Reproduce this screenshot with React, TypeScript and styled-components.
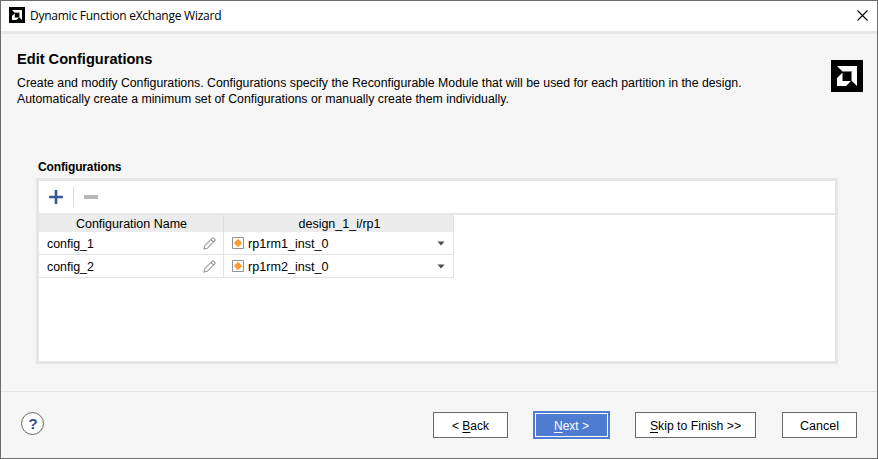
import React from 'react';
import styled, { createGlobalStyle } from 'styled-components';

const GlobalStyle = createGlobalStyle`
  *, *::before, *::after { box-sizing: border-box; }
  body { margin: 0; }
`;

const Dialog = styled.div`
  width: 878px;
  height: 459px;
  display: flex;
  flex-direction: column;
  border: 1px solid #6d6d6d;
  background: #f6f6f6;
  color: #000;
  font: 12px/16px "Liberation Sans", Arial, sans-serif;
  white-space: nowrap;
  overflow: hidden;
`;

const TitleBar = styled.header`
  height: 33px;
  flex: none;
  display: flex;
  align-items: flex-start;
  padding: 6px 9px 0 8px;
  background: #fff;
  border-bottom: 3px solid #e6e6e6;
`;

const Title = styled.span`
  margin-left: 5px;
  padding-top: 1px;
  flex: 1;
  font-family: "Open Sans", "Noto Sans", sans-serif;
  letter-spacing: -0.25px;
`;

const CloseButton = styled.button`
  display: flex;
  padding: 3px 0 0;
  border: 0;
  background: none;
`;

const Intro = styled.section`
  height: 124px;
  flex: none;
  display: flex;
  justify-content: space-between;
  padding: 17px 14px 0 16px;
`;

const Heading = styled.h1`
  margin: 0 0 8px;
  font-size: 14.6px;
  line-height: 16px;
`;

const Description = styled.p`
  margin: 0;
  font-size: 12.3px;
  line-height: 16px;
`;

const LogoSlot = styled.div`
  padding-top: 9px;
`;

const Content = styled.main`
  flex: none;
  height: 234px;
  padding: 0 39px 0 35px;
  border-bottom: 1px solid #e3e3e3;
`;

const SectionTitle = styled.h2`
  margin: 0;
  padding: 1px 0 0 2px;
  height: 20px;
  font-size: 12px;
  line-height: 16px;
  letter-spacing: -0.14px;
`;

const Panel = styled.div`
  height: 186px;
  border: 3px solid #e6e6e6;
  background: #fff;
`;

const Toolbar = styled.div`
  height: 34px;
  display: flex;
  align-items: center;
  padding-left: 10px;
  border-bottom: 2px solid #e6e6e6;
`;

const ToolSeparator = styled.div`
  width: 1px;
  height: 20px;
  margin: 0 10px;
  background: #dcdcdc;
`;

const TableArea = styled.div`
  width: 415px;
  border-right: 1px solid #e3e3e3;
`;

const Table = styled.div`
  display: grid;
  grid-template-columns: 184px 230px;
  grid-template-rows: 17px 23px 23px;
`;

const HeaderCell = styled.div<{ $divided?: boolean }>`
  display: flex;
  align-items: center;
  justify-content: center;
  padding-left: ${p => (p.$divided ? 2 : 1)}px;
  border-left: ${p => (p.$divided ? '1px solid #dcdcdc' : '0')};
  background: #ececec;
  font-size: 12.5px;
`;

const Cell = styled.div<{ $assigned?: boolean }>`
  display: flex;
  align-items: center;
  padding: 0 ${p => (p.$assigned ? 8 : 7)}px 0 8px;
  border-bottom: 1px solid #e3e3e3;
  border-left: ${p => (p.$assigned ? '1px solid #e3e3e3' : '0')};
  font-size: ${p => (p.$assigned ? 12.6 : 12.4)}px;
`;

const CellText = styled.span<{ $gap?: number }>`
  flex: 1;
  padding-top: 2px;
  margin-left: ${p => p.$gap ?? 0}px;
`;

const Footer = styled.footer`
  flex: 1;
  display: flex;
  align-items: flex-start;
  padding: 20px;
`;

const HelpButton = styled.button`
  width: 23px;
  height: 23px;
  padding: 0 0 0 1px;
  border: 1px solid #686868;
  border-radius: 50%;
  background: #fff;
  color: #2f4f93;
  font: bold 15px/21px "Liberation Sans", Arial, sans-serif;
  text-align: center;
`;

const Actions = styled.div`
  margin-left: auto;
  height: 26px;
  display: flex;
  align-items: center;
  gap: 25px;
`;

const ActionButton = styled.button<{ $width: number; $fontSize?: number }>`
  width: ${p => p.$width}px;
  height: 26px;
  padding: 1px 0 0;
  border: 1px solid #696969;
  background: #fff;
  color: #000;
  font: ${p => p.$fontSize ?? 12}px/16px "Liberation Sans", Arial, sans-serif;
`;

const PrimaryButton = styled(ActionButton)`
  height: 28px;
  border: 2px solid #4f7cd1;
  background: #4f7cd1;
  color: #fff;
  box-shadow: inset 0 0 0 1px #fff;
`;

const CancelButton = styled(ActionButton)`
  margin-left: 1px;
`;

const Mnemonic = styled.span`
  text-decoration: underline;
  text-decoration-thickness: 1px;
  text-underline-offset: 2px;
  text-decoration-skip-ink: none;
`;

const BrandMark = ({ size }: { size: number }) => (
  <svg width={size} height={size} viewBox="0 0 32 32">
    <path d="M0 0h32v32H0z" fill="#000" />
    <path d="M6 6h20v20l-5.500-5.500V11.500H11.500z" fill="#fff" />
    <path d="M11.500 12.500v8.500h8.500l-5 5H6V18z" fill="#fff" />
    <path d="M11.500 11.500h9v9" fill="none" stroke="#777" strokeWidth="1" />
  </svg>
);

const CloseIcon = () => (
  <svg width="11" height="11" viewBox="0 0 11 11">
    <path d="M.5.5l10 10M10.500.5l-10 10" stroke="#000" strokeWidth="1.100" />
  </svg>
);

const AddIcon = () => (
  <svg width="14" height="14" viewBox="0 0 14 14">
    <path d="M7 0v14M0 7h14" stroke="#3a5795" strokeWidth="2.600" />
  </svg>
);

const RemoveIcon = () => (
  <svg width="14" height="14" viewBox="0 0 14 14">
    <path d="M0 5h14v4H0z" fill="#b8b8b8" />
  </svg>
);

const PencilIcon = () => (
  <svg width="13" height="13" viewBox="0 0 13 13" fill="none" stroke="#999" strokeWidth="1.100">
    <path d="M1 12l.7-3.300 7.600-7.600q.7-.6 1.400 0l1.200 1.200q.6.7 0 1.400L4.300 11.300zM8 2.500l2.500 2.500" />
  </svg>
);

const ModuleIcon = () => (
  <svg width="12" height="12" viewBox="0 0 12 12">
    <path d="M.5.5h11v11H.5z" fill="#fff" stroke="#929292" />
    <path d="M6 1.800L10.200 6 6 10.200 1.800 6z" fill="#fb9b32" />
  </svg>
);

const ChevronIcon = () => (
  <svg width="8" height="5" viewBox="0 0 8 5">
    <path d="M.5.5h7L4 4.500z" fill="#4c4c4c" />
  </svg>
);

const configurations = [
  { name: 'config_1', module: 'rp1rm1_inst_0' },
  { name: 'config_2', module: 'rp1rm2_inst_0' },
];

export default function App() {
  return (
    <>
      <GlobalStyle />
      <Dialog>
        <TitleBar>
          <BrandMark size={16} />
          <Title>Dynamic Function eXchange Wizard</Title>
          <CloseButton aria-label="Close"><CloseIcon /></CloseButton>
        </TitleBar>
        <Intro>
          <div>
            <Heading>Edit Configurations</Heading>
            <Description>
              Create and modify Configurations. Configurations specify the Reconfigurable Module that will be used for each partition in the design.
              <br />
              Automatically create a minimum set of Configurations or manually create them individually.
            </Description>
          </div>
          <LogoSlot><BrandMark size={32} /></LogoSlot>
        </Intro>
        <Content>
          <SectionTitle>Configurations</SectionTitle>
          <Panel>
            <Toolbar>
              <AddIcon />
              <ToolSeparator />
              <RemoveIcon />
            </Toolbar>
            <TableArea>
              <Table>
                <HeaderCell>Configuration Name</HeaderCell>
                <HeaderCell $divided>design_1_i/rp1</HeaderCell>
                {configurations.map(c => (
                  <React.Fragment key={c.name}>
                    <Cell>
                      <CellText>{c.name}</CellText>
                      <PencilIcon />
                    </Cell>
                    <Cell $assigned>
                      <ModuleIcon />
                      <CellText $gap={4}>{c.module}</CellText>
                      <ChevronIcon />
                    </Cell>
                  </React.Fragment>
                ))}
              </Table>
            </TableArea>
          </Panel>
        </Content>
        <Footer>
          <HelpButton>?</HelpButton>
          <Actions>
            <ActionButton $width={75}>&lt; <Mnemonic>B</Mnemonic>ack</ActionButton>
            <PrimaryButton $width={77}><Mnemonic>N</Mnemonic>ext &gt;</PrimaryButton>
            <ActionButton $width={121} $fontSize={12.25}><Mnemonic>S</Mnemonic>kip to Finish &gt;&gt;</ActionButton>
            <CancelButton $width={75} $fontSize={12.5}>Cancel</CancelButton>
          </Actions>
        </Footer>
      </Dialog>
    </>
  );
}
